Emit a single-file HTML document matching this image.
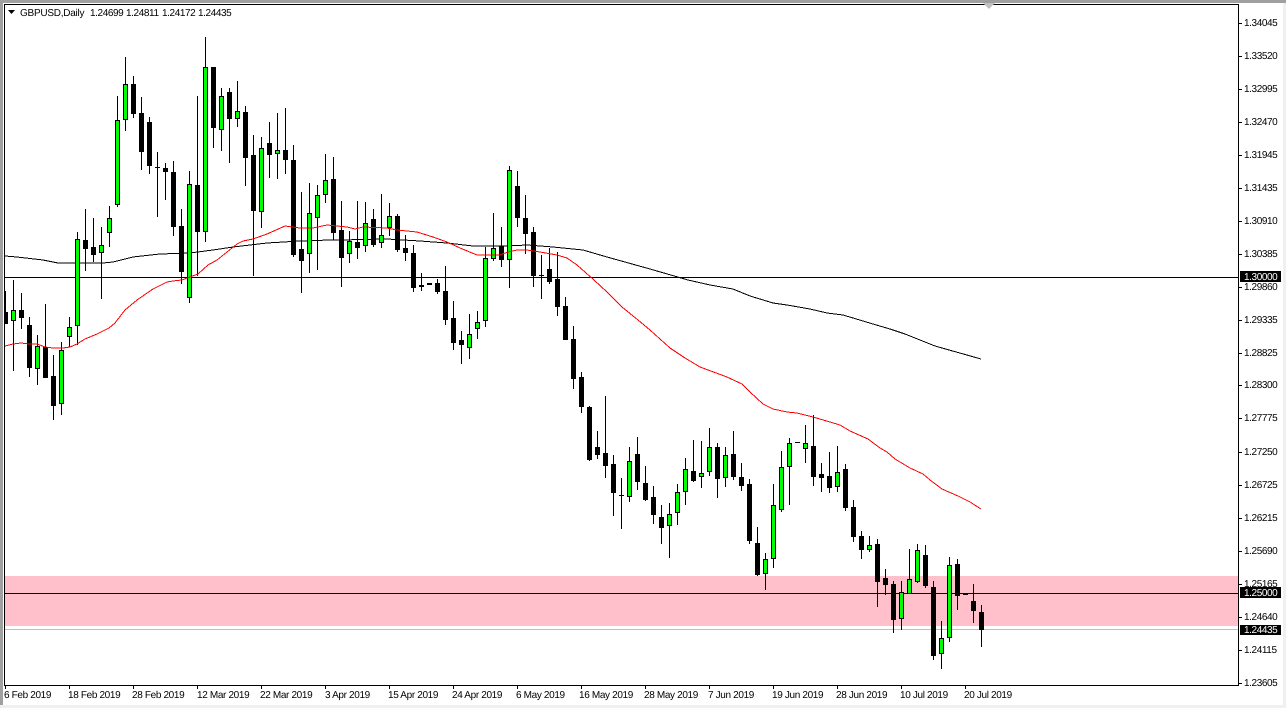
<!DOCTYPE html>
<html><head><meta charset="utf-8"><style>
html,body{margin:0;padding:0;background:#fff;width:1286px;height:708px;overflow:hidden}
svg{display:block;font-family:"Liberation Sans",sans-serif;font-size:10px;text-rendering:geometricPrecision}
.a{letter-spacing:-.4px}
.d{letter-spacing:-.35px}
</style></head><body>
<svg width="1286" height="708" viewBox="0 0 1286 708">
<rect width="1286" height="708" fill="#fff"/>
<rect x="0" y="0" width="1286" height="3" fill="#a0a0a0"/>
<rect x="0" y="0" width="3" height="708" fill="#a0a0a0"/>
<rect x="0" y="705" width="1286" height="3" fill="#f0f0f0"/>
<rect x="1283" y="3" width="3" height="705" fill="#f0f0f0"/>
<rect x="5" y="576" width="1233" height="50" fill="#ffc0cb"/>
<g shape-rendering="crispEdges" fill="none">
<path d="M5 629.5H1238" stroke="#c0c0c0"/>
<path d="M5 277.5H1238M5 593.5H1238" stroke="#000"/>
<path d="M4.5 4V686M4 4.5H1239M1238.5 4V686M4 685.5H1239" stroke="#000"/>
<path d="M5.5 686V689M69.5 686V689M133.5 686V689M197.5 686V689M261.5 686V689M325.5 686V689M389.5 686V689M453.5 686V689M517.5 686V689M581.5 686V689M645.5 686V689M709.5 686V689M773.5 686V689M837.5 686V689M901.5 686V689M965.5 686V689" stroke="#000"/>
<path d="M1239 23.5H1242M1239 56.5H1242M1239 89.5H1242M1239 122.5H1242M1239 155.5H1242M1239 188.5H1242M1239 221.5H1242M1239 254.5H1242M1239 287.5H1242M1239 320.5H1242M1239 353.5H1242M1239 385.5H1242M1239 418.5H1242M1239 452.5H1242M1239 485.5H1242M1239 518.5H1242M1239 551.5H1242M1239 584.5H1242M1239 617.5H1242M1239 650.5H1242M1239 683.5H1242" stroke="#000"/>
</g>
<path d="M983 3H995L989 9Z" fill="#c0c0c0"/>
<clipPath id="c"><rect x="5" y="5" width="1233" height="680"/></clipPath>
<g clip-path="url(#c)" fill="none">
<polyline shape-rendering="crispEdges" stroke="#000" stroke-width="1" points="5,256 17,257 43,260 58,263 80,263 103,263 113,262 133,257 160,254 190,253 213,250 233,247 267,243 300,241 330,240 340,240 387,239 403,240 420,241 447,243 473,246 507,246 527,245 553,247 583,250 607,257 650,269 688,280 710,285 733,289 750,296 773,303 787,305 810,309 827,313 843,315 853,318 873,324 890,329 905,334 935,346 981,359"/>
<g shape-rendering="crispEdges">
<path stroke="#000" stroke-width="1" d="M5.5 291V324M13.5 280V371M21.5 293V329M29.5 317V377M37.5 335V385M45.5 304V378M53.5 355V420M61.5 342V415M69.5 317V347M77.5 232V345M85.5 209V271M93.5 218V262M101.5 227V299M109.5 206V247M117.5 96V207M125.5 57V131M133.5 76V118M141.5 97V170M149.5 117V174M157.5 152V217M165.5 163V200M173.5 161V236M181.5 209V284M189.5 171V303M197.5 96V276M205.5 37V242M213.5 67V148M221.5 88V151M229.5 88V163M237.5 81V127M245.5 106V186M253.5 135V276M261.5 137V228M269.5 122V178M277.5 113V179M285.5 108V174M293.5 145V257M301.5 192V293M309.5 183V273M317.5 185V270M325.5 154V203M333.5 157V240M341.5 201V287M349.5 231V263M357.5 201V259M365.5 202V252M373.5 209V247M381.5 194V248M389.5 203V236M397.5 214V252M405.5 235V261M413.5 245V292M421.5 273V291M437.5 279V294M445.5 266V325M453.5 301V350M461.5 331V364M469.5 314V359M477.5 311V339M485.5 247V327M493.5 213V261M501.5 227V267M509.5 166V288M517.5 171V227M525.5 195V254M533.5 227V287M541.5 255V299M549.5 248V284M557.5 252V316M565.5 297V340M573.5 326V389M581.5 372V413M589.5 406V461M597.5 431V459M605.5 396V478M613.5 455V516M621.5 478V529M629.5 447V502M637.5 437V490M645.5 466V501M653.5 486V524M661.5 505V544M669.5 503V558M677.5 484V525M685.5 458V505M693.5 440V482M701.5 441V488M709.5 428V476M717.5 443V498M725.5 447V487M733.5 431V480M741.5 463V491M749.5 479V544M757.5 527V576M765.5 553V590M773.5 484V568M781.5 451V512M789.5 438V505M805.5 425V463M813.5 415V486M821.5 463V492M829.5 452V493M837.5 446V492M845.5 464V511M853.5 500V542M861.5 531V559M869.5 536V552M877.5 539V607M885.5 569V595M893.5 581V633M901.5 581V630M909.5 549V594M917.5 544V583M925.5 545V588M933.5 581V660M941.5 621V669M949.5 557V642M957.5 559V610M973.5 584V623M981.5 605V647"/>
<path stroke="#000" stroke-width="5" d="M5.5 312V324M13.5 310V321M21.5 310V318M29.5 325V368M37.5 346V369M45.5 347V378M53.5 376V406M61.5 350V404M69.5 327V337M77.5 239V326M85.5 240V249M93.5 247V255M101.5 245V253M109.5 218V233M117.5 120V205M125.5 84V120M133.5 84V114M141.5 113V152M149.5 122V166M157.5 167V168M165.5 168V172M173.5 172V227M181.5 226V272M189.5 184V298M197.5 185V232M205.5 67V232M213.5 67V128M221.5 96V130M229.5 92V119M237.5 111V119M245.5 112V158M253.5 155V211M261.5 148V212M269.5 143V155M277.5 150V154M285.5 150V160M293.5 160V255M301.5 249V261M309.5 213V254M317.5 195V218M325.5 180V195M333.5 179V233M341.5 230V258M349.5 241V254M357.5 242V248M365.5 223V246M373.5 219V245M381.5 235V243M389.5 216V228M397.5 216V250M405.5 248V253M413.5 253V288M421.5 285V287M429.5 283V285M437.5 283V292M445.5 291V320M453.5 318V343M461.5 340V345M469.5 334V348M477.5 322V329M485.5 258V321M493.5 248V259M501.5 246V260M509.5 170V260M517.5 186V218M525.5 218V234M533.5 232V276M541.5 275V276M549.5 269V282M557.5 279V307M565.5 306V340M573.5 339V379M581.5 377V407M589.5 407V460M597.5 447V455M605.5 453V466M613.5 464V493M621.5 495V496M629.5 461V497M637.5 454V482M645.5 483V500M653.5 497V515M661.5 517V528M669.5 514V526M677.5 492V513M685.5 469V492M693.5 471V481M701.5 473V477M709.5 447V472M717.5 447V479M725.5 455V478M733.5 454V477M741.5 477V486M749.5 484V541M757.5 543V575M765.5 559V574M773.5 505V559M781.5 467V510M789.5 443V467M797.5 442V443M805.5 443V449M813.5 446V477M821.5 474V478M829.5 476V488M837.5 472V487M845.5 469V508M853.5 507V537M861.5 536V550M869.5 545V550M877.5 544V582M885.5 578V585M893.5 584V620M901.5 592V619M909.5 579V594M917.5 550V582M925.5 555V586M933.5 587V656M941.5 638V654M949.5 565V638M957.5 564V596M965.5 594V595M973.5 601V611M981.5 612V630"/>
<path stroke="#00ff00" stroke-width="3" d="M13.5 311V320M37.5 347V368M61.5 351V403M69.5 328V336M77.5 240V325M101.5 246V252M109.5 219V232M117.5 121V204M125.5 85V119M189.5 185V297M205.5 68V231M221.5 97V129M237.5 112V118M261.5 149V211M277.5 151V153M309.5 214V253M317.5 196V217M325.5 181V194M349.5 242V253M365.5 224V245M381.5 236V242M389.5 217V227M469.5 335V347M477.5 323V328M485.5 259V320M493.5 249V258M509.5 171V259M629.5 462V496M669.5 515V525M677.5 493V512M685.5 470V491M701.5 474V476M709.5 448V471M725.5 456V477M765.5 560V573M773.5 506V558M781.5 468V509M789.5 444V466M805.5 444V448M837.5 473V486M869.5 546V549M901.5 593V618M909.5 580V593M917.5 551V581M941.5 639V653M949.5 566V637"/>
</g>
<polyline shape-rendering="crispEdges" stroke="#ff0000" stroke-width="1" points="5,346 13,344 21,343 29,344 37,344 45,347 53,348 63,348 70,347 77,344 85,339 97,334 109,328 115,323 125,310 137,300 153,289 167,282 173,281 182,280 190,277 198,274 208,265 217,260 227,252 237,244 243,241 253,239 267,234 285,226 300,228 313,228 327,225 337,226 347,227 355,229 363,227 387,228 397,230 417,232 433,237 447,242 460,248 477,255 500,255 508,252 517,250 527,250 540,252 557,255 567,258 577,265 594,280 607,292 622,307 638,320 650,330 670,348 685,358 700,367 727,377 742,384 750,392 763,404 773,409 787,412 797,413 813,417 830,422 840,425 850,431 868,439 880,448 887,452 895,459 910,468 923,474 930,480 942,489 958,496 970,502 981,509"/>
</g>
<path d="M8 10H15L11.5 14Z" fill="#000"/>
<text x="20" y="16" style="letter-spacing:-.25px">GBPUSD,Daily</text>
<g class="a">
<text x="90" y="16">1.24699</text><text x="126" y="16">1.24811</text><text x="162" y="16">1.24172</text><text x="198" y="16">1.24435</text>
<text x="1244" y="26">1.34045</text><text x="1244" y="59">1.33520</text><text x="1244" y="92">1.32995</text><text x="1244" y="125">1.32470</text><text x="1244" y="158">1.31945</text><text x="1244" y="191">1.31435</text><text x="1244" y="224">1.30910</text><text x="1244" y="257">1.30385</text><text x="1244" y="290">1.29860</text><text x="1244" y="323">1.29335</text><text x="1244" y="356">1.28825</text><text x="1244" y="388">1.28300</text><text x="1244" y="421">1.27775</text><text x="1244" y="455">1.27250</text><text x="1244" y="488">1.26725</text><text x="1244" y="521">1.26215</text><text x="1244" y="554">1.25690</text><text x="1244" y="587">1.25165</text><text x="1244" y="620">1.24640</text><text x="1244" y="653">1.24115</text><text x="1244" y="686">1.23605</text>
<rect x="1240" y="271" width="41" height="11" fill="#000"/><text x="1244" y="280" fill="#fff">1.30000</text>
<rect x="1240" y="587" width="41" height="11" fill="#000"/><text x="1244" y="596" fill="#fff">1.25000</text>
<rect x="1240" y="625" width="41" height="10" fill="#000"/><text x="1244" y="633" fill="#fff">1.24435</text>
</g>
<g class="d">
<text x="4" y="698">6 Feb 2019</text><text x="68" y="698">18 Feb 2019</text><text x="132" y="698">28 Feb 2019</text><text x="197" y="698">12 Mar 2019</text><text x="260" y="698">22 Mar 2019</text><text x="325" y="698">3 Apr 2019</text><text x="388" y="698">15 Apr 2019</text><text x="452" y="698">24 Apr 2019</text><text x="516" y="698">6 May 2019</text><text x="579" y="698">16 May 2019</text><text x="644" y="698">28 May 2019</text><text x="708" y="698">7 Jun 2019</text><text x="772" y="698">19 Jun 2019</text><text x="836" y="698">28 Jun 2019</text><text x="900" y="698">10 Jul 2019</text><text x="964" y="698">20 Jul 2019</text>
</g>
</svg>
</body></html>
